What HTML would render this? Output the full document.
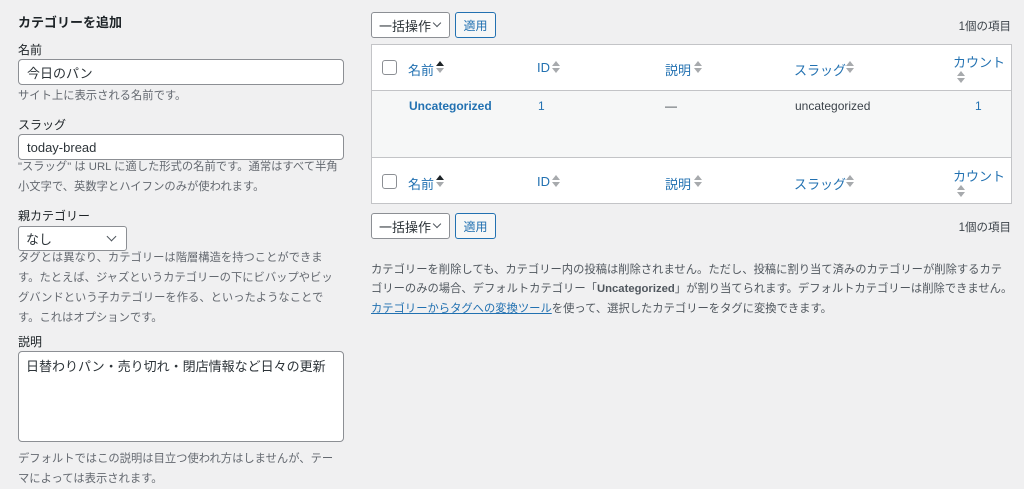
<!DOCTYPE html>
<html><head><meta charset="utf-8"><style>
*{box-sizing:border-box;margin:0;padding:0}
body{width:1024px;height:484px;background:#f0f0f1;font-family:"Liberation Sans","Noto Sans CJK JP",sans-serif;color:#3c434a;font-size:13px;position:relative;overflow:hidden}
.a{position:absolute;white-space:nowrap}
.lbl{font-size:12px;color:#1d2327}
.help{font-size:11.3px;color:#646970;line-height:20px}
.inp{position:absolute;background:#fff;border:1px solid #8c8f94;border-radius:4px;font-size:13px;color:#2c3338;padding-left:8px;display:flex;align-items:center}
.sel{position:absolute;background:#fff;border:1px solid #8c8f94;border-radius:3px;font-size:13px;color:#2c3338;padding-left:7px;display:flex;align-items:center}
.btn{position:absolute;background:#f6f7f7;border:1px solid #2271b1;border-radius:3px;color:#2271b1;font-size:12px;display:flex;align-items:center;justify-content:center}
.chev{position:absolute;width:7px;height:7px;border-right:1.5px solid #50575e;border-bottom:1.5px solid #50575e;transform:rotate(45deg)}
.th{color:#2271b1;font-size:13px}
.cb{position:absolute;width:15px;height:15px;border:1px solid #8c8f94;border-radius:3px;background:#fff}
.s{position:absolute;width:0;height:0;border-left:4px solid transparent;border-right:4px solid transparent}
.up{border-bottom:5px solid #a7aaad}.dn{border-top:5px solid #a7aaad}
.upd{border-bottom:5px solid #1d2327}
</style></head><body>
<div class="a" style="left:18px;top:12px;font-size:13px;font-weight:bold;color:#1d2327">カテゴリーを追加</div>
<div class="a lbl" style="left:18px;top:41px">名前</div>
<div class="inp" style="left:18px;top:59px;width:326px;height:26px">今日のパン</div>
<div class="a help" style="left:18px;top:86px">サイト上に表示される名前です。</div>
<div class="a lbl" style="left:18px;top:116px">スラッグ</div>
<div class="inp" style="left:18px;top:134px;width:326px;height:26px">today-bread</div>
<div class="a help" style="left:18px;top:157px">"スラッグ" は URL に適した形式の名前です。通常はすべて半角<br>小文字で、英数字とハイフンのみが使われます。</div>
<div class="a lbl" style="left:18px;top:207px">親カテゴリー</div>
<div class="sel" style="left:18px;top:226px;width:109px;height:25px">なし</div>
<div class="chev" style="left:108px;top:233px"></div>
<div class="a help" style="left:18px;top:248px">タグとは異なり、カテゴリーは階層構造を持つことができま<br>す。たとえば、ジャズというカテゴリーの下にビバップやビッ<br>グバンドという子カテゴリーを作る、といったようなことで<br>す。これはオプションです。</div>
<div class="a lbl" style="left:18px;top:333px">説明</div>
<div class="inp" style="left:18px;top:351px;width:326px;height:91px;align-items:flex-start;padding-top:4px;padding-left:7px">日替わりパン・売り切れ・閉店情報など日々の更新</div>
<div class="a help" style="left:18px;top:449px">デフォルトではこの説明は目立つ使われ方はしませんが、テー<br>マによっては表示されます。</div>

<div class="sel" style="left:371px;top:12px;width:79px;height:26px">一括操作</div>
<div class="chev" style="left:434px;top:20px;width:6px;height:6px"></div>
<div class="btn" style="left:455px;top:12px;width:41px;height:26px">適用</div>
<div class="a" style="right:13px;top:18px;font-size:11.5px;color:#3c434a">1個の項目</div>

<div style="position:absolute;left:371px;top:44px;width:641px;height:160px;background:#fff;border:1px solid #c3c4c7"></div>
<div style="position:absolute;left:372px;top:90px;width:639px;height:68px;background:#f6f7f7;border-top:1px solid #c3c4c7;border-bottom:1px solid #c3c4c7"></div>

<div class="cb" style="left:382px;top:60px"></div>
<div class="a th" style="left:408px;top:60px">名前</div>
<div class="s upd" style="left:436px;top:61px"></div><div class="s dn" style="left:436px;top:68px"></div>
<div class="a th" style="left:537px;top:60px">ID</div>
<div class="s up" style="left:552px;top:61px"></div><div class="s dn" style="left:552px;top:68px"></div>
<div class="a th" style="left:665px;top:60px">説明</div>
<div class="s up" style="left:694px;top:61px"></div><div class="s dn" style="left:694px;top:68px"></div>
<div class="a th" style="left:794px;top:60px">スラッグ</div>
<div class="s up" style="left:846px;top:61px"></div><div class="s dn" style="left:846px;top:68px"></div>
<div class="a th" style="left:953px;top:52px">カウント</div>
<div class="s up" style="left:957px;top:71px"></div><div class="s dn" style="left:957px;top:78px"></div>

<div class="a" style="left:409px;top:99px;color:#2271b1;font-weight:bold;font-size:12px">Uncategorized</div>
<div class="a" style="left:538px;top:99px;font-size:12px;color:#2271b1">1</div>
<div class="a" style="left:665px;top:99px;font-size:12px">—</div>
<div class="a" style="left:795px;top:99px;font-size:12px">uncategorized</div>
<div class="a" style="left:975px;top:99px;font-size:12px;color:#2271b1">1</div>

<div class="cb" style="left:382px;top:174px"></div>
<div class="a th" style="left:408px;top:174px">名前</div>
<div class="s upd" style="left:436px;top:175px"></div><div class="s dn" style="left:436px;top:182px"></div>
<div class="a th" style="left:537px;top:174px">ID</div>
<div class="s up" style="left:552px;top:175px"></div><div class="s dn" style="left:552px;top:182px"></div>
<div class="a th" style="left:665px;top:174px">説明</div>
<div class="s up" style="left:694px;top:175px"></div><div class="s dn" style="left:694px;top:182px"></div>
<div class="a th" style="left:794px;top:174px">スラッグ</div>
<div class="s up" style="left:846px;top:175px"></div><div class="s dn" style="left:846px;top:182px"></div>
<div class="a th" style="left:953px;top:166px">カウント</div>
<div class="s up" style="left:957px;top:185px"></div><div class="s dn" style="left:957px;top:192px"></div>

<div class="sel" style="left:371px;top:213px;width:79px;height:26px">一括操作</div>
<div class="chev" style="left:434px;top:221px;width:6px;height:6px"></div>
<div class="btn" style="left:455px;top:213px;width:41px;height:26px">適用</div>
<div class="a" style="right:13px;top:219px;font-size:11.5px">1個の項目</div>

<div class="a help" style="left:371px;top:261px;color:#50575e;line-height:19px">カテゴリーを削除しても、カテゴリー内の投稿は削除されません。ただし、投稿に割り当て済みのカテゴリーが削除するカテ<br>ゴリーのみの場合、デフォルトカテゴリー「<b>Uncategorized</b>」が割り当てられます。デフォルトカテゴリーは削除できません。</div>
<div class="a" style="left:371px;top:300px;font-size:11.3px;color:#50575e"><span style="color:#2271b1;text-decoration:underline">カテゴリーからタグへの変換ツール</span>を使って、選択したカテゴリーをタグに変換できます。</div>
</body></html>
